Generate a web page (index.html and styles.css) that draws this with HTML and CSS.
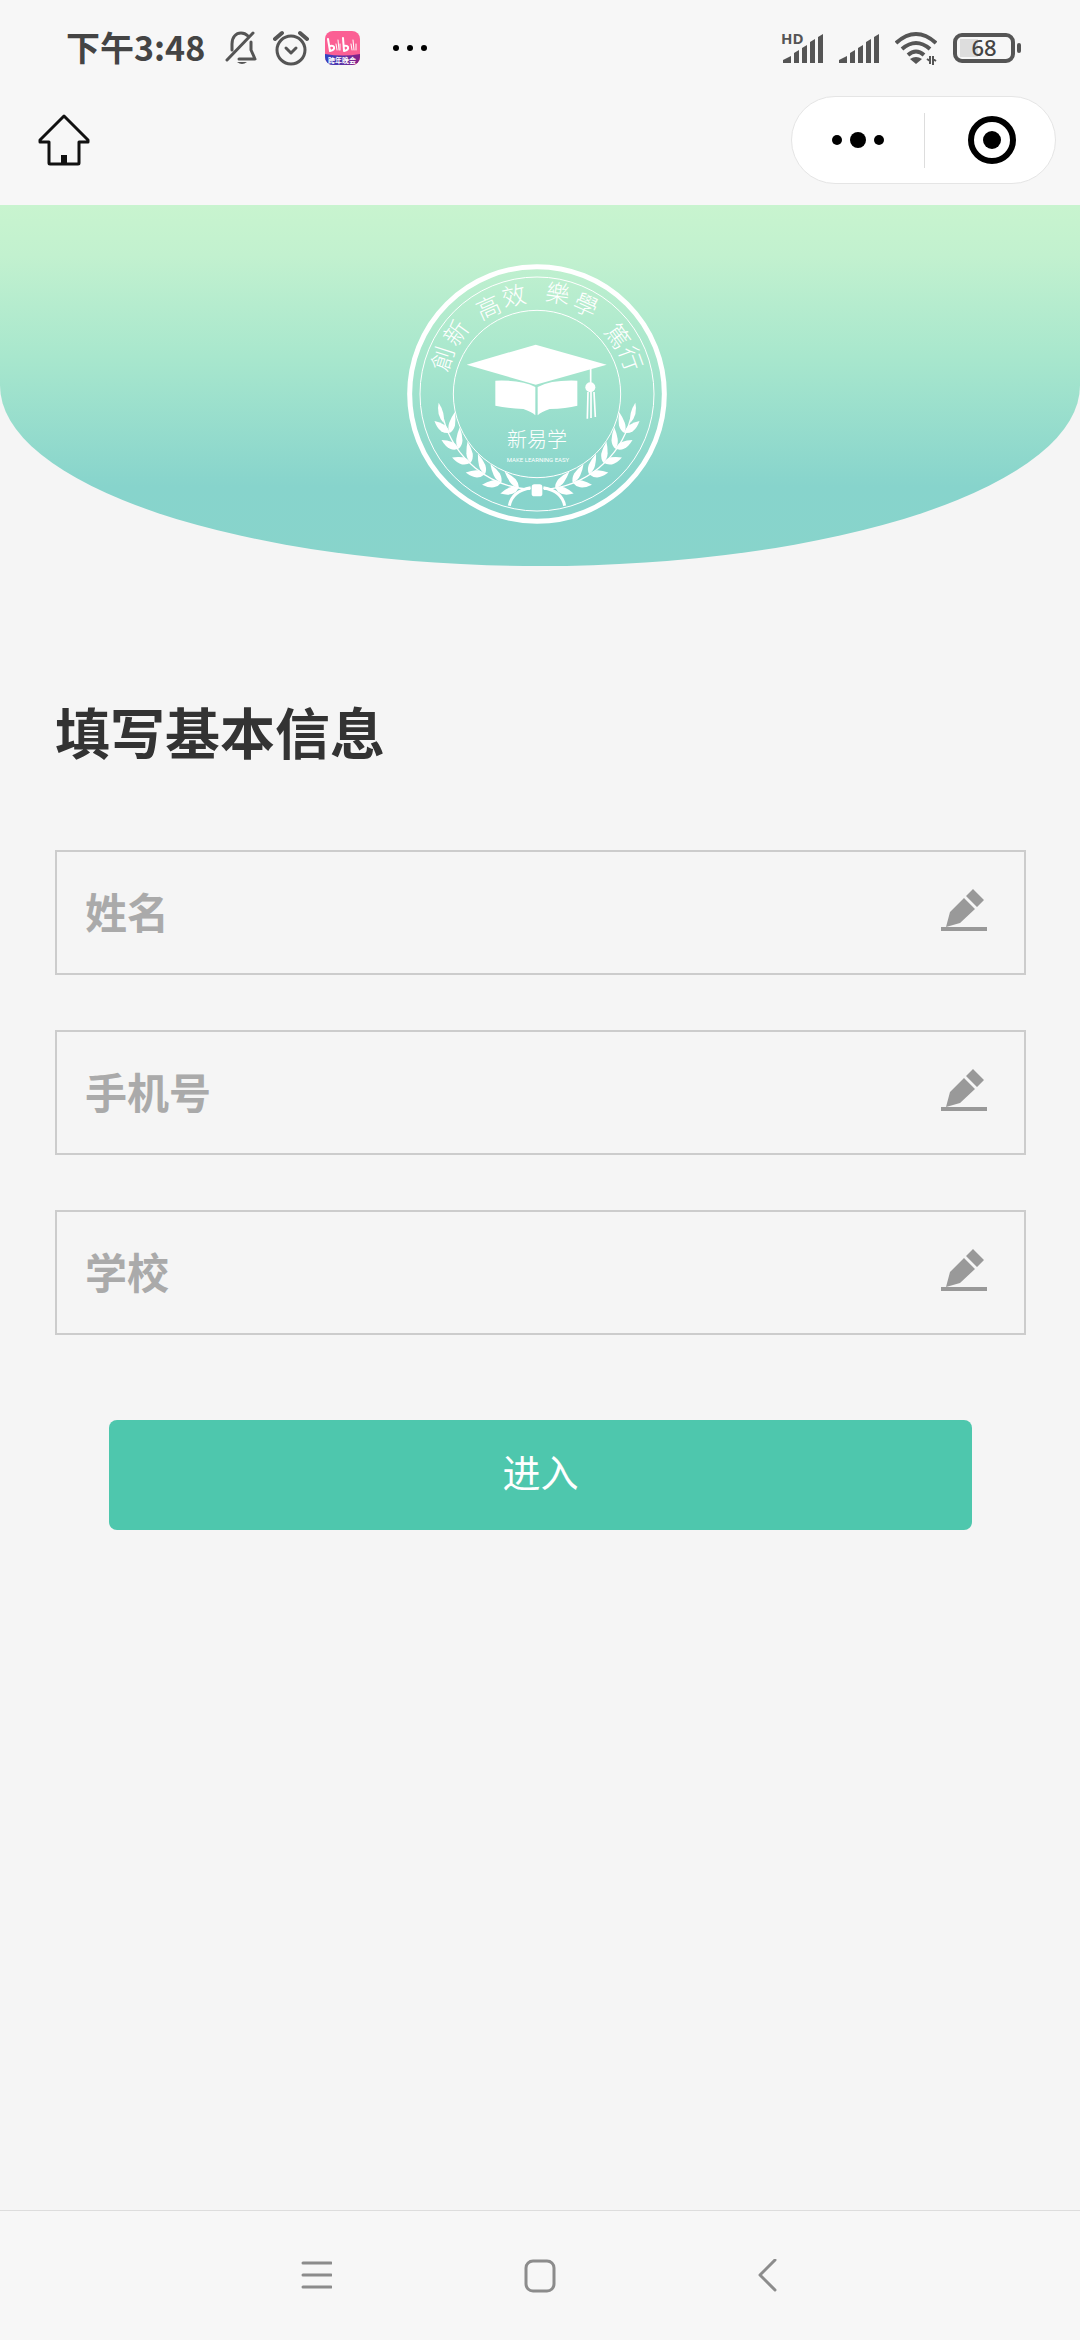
FILE: index.html
```html
<!DOCTYPE html>
<html lang="zh-CN">
<head>
<meta charset="utf-8">
<meta name="viewport" content="width=device-width, initial-scale=1">
<title>填写基本信息</title>
<link rel="stylesheet" href="styles.css">
</head>
<body>
<header class="top">
  <div class="status">
    <div class="status-group">
      <span class="time">下午3:48</span>
      <svg width="32" height="34" viewBox="0 0 32 34" fill="none" stroke="#555" stroke-width="3" stroke-linecap="round" stroke-linejoin="round" aria-hidden="true">
        <path d="M7 19V13C7 6 11 2 16 2Q20 2 23 5M26 11V19L30 28H14M2 29L28 2"/>
        <path d="M12 31Q17 35 22 31Z" fill="#555" stroke="none"/>
      </svg>
      <svg width="36" height="36" viewBox="0 0 36 36" fill="none" stroke="#555" stroke-width="3" stroke-linecap="round" stroke-linejoin="round" aria-hidden="true">
        <circle cx="18" cy="20" r="14"/>
        <path d="M13 18L18 23L23 18"/>
        <path d="M2 9L9 3M27 3L34 9" stroke-width="4"/>
      </svg>
      <svg width="35" height="34" viewBox="0 0 35 34" aria-hidden="true">
        <defs>
          <linearGradient id="app-band"><stop offset="0" stop-color="#2f45c4"/><stop offset="1" stop-color="#8a1f86"/></linearGradient>
          <clipPath id="app-shape"><rect width="35" height="34" rx="8"/></clipPath>
        </defs>
        <g clip-path="url(#app-shape)">
          <rect width="35" height="34" fill="#fb5f94"/>
          <path d="M0 23Q18 26 35 23V34H0Z" fill="url(#app-band)"/>
        </g>
        <g fill="none" stroke="#fff" stroke-width="2" stroke-linecap="round" stroke-linejoin="round">
          <path d="M3 8L5 20Q10 19 9 16Q8 14 5 15M18 7L19 20Q24 19 23 16Q22 14 19 15"/>
          <path d="M11 13L12 19M13 9L14 19M15 13V19M26 13L27 19M28 9L29 19M31 13V19" stroke-width="1"/>
        </g>
        <text x="17" y="32" text-anchor="middle" class="app-text">跨年晚会</text>
      </svg>
      <svg class="more" width="36" height="8" viewBox="0 0 36 8" aria-hidden="true"><circle cx="4" cy="4" r="3"/><circle cx="18" cy="4" r="3"/><circle cx="32" cy="4" r="3"/></svg>
    </div>
    <div class="status-group">
      <svg width="43" height="48" viewBox="0 -8 43 48" fill="#555" aria-hidden="true">
        <text x="1" y="12" class="hd-text">HD</text>
        <path d="M3 31V28L11 24V31ZM14 31V21L19 18V31ZM22 31V16L27 13V31ZM30 31V10L35 7V31ZM38 31V5L43 2V31Z"/>
      </svg>
      <svg width="40" height="48" viewBox="0 -8 40 48" fill="#555" aria-hidden="true">
        <path d="M0 31V28L8 24V31ZM11 31V21L16 18V31ZM19 31V16L24 13V31ZM27 31V10L32 7V31ZM35 31V5L40 2V31Z"/>
      </svg>
      <svg width="42" height="34" viewBox="0 0 42 34" fill="none" stroke="#555" stroke-width="4" aria-hidden="true">
        <path d="M1 12Q21 -6 41 12M7 18Q21 6 35 18M13 24Q21 17 29 24"/>
        <path d="M15 28Q21 24 27 28L21 33Z" fill="#555" stroke="none"/>
        <path d="M32 28L35 30V25V33M41 30L38 28V25V34" stroke-width="2"/>
      </svg>
      <svg width="68" height="30" viewBox="0 0 68 30" aria-label="68%">
        <rect x="7" y="6" width="18" height="18" fill="#ddd"/>
        <rect x="2" y="2" width="58" height="26" rx="7" fill="none" stroke="#555" stroke-width="4"/>
        <rect x="64" y="10" width="4" height="10" rx="2" fill="#555"/>
        <text x="31" y="23" text-anchor="middle" class="battery-text">68</text>
      </svg>
    </div>
  </div>
  <div class="bar">
    <button class="plain" type="button" aria-label="首页">
      <svg width="54" height="54" viewBox="0 0 54 54" fill="none" stroke="#111" stroke-width="3" stroke-linejoin="round">
        <path d="M27 3L51 27V29H42V50Q42 51 41 51H13Q12 51 12 50V29H3V27Z"/>
        <path d="M27 42V51" stroke-width="6"/>
      </svg>
    </button>
    <div class="capsule">
      <button class="plain capsule-btn" type="button" aria-label="更多">
        <svg width="52" height="18" viewBox="0 0 52 18"><circle cx="5" cy="9" r="5"/><circle cx="26" cy="9" r="8"/><circle cx="47" cy="9" r="5"/></svg>
      </button>
      <button class="plain capsule-btn" type="button" aria-label="关闭">
        <svg width="50" height="50" viewBox="0 0 50 50"><circle cx="25" cy="25" r="21" fill="none" stroke="#000" stroke-width="6"/><circle cx="25" cy="25" r="9"/></svg>
      </button>
    </div>
  </div>
</header>

<div class="hero">
  <svg width="266" height="260" viewBox="51 41 798 780" fill="#fff" role="img" aria-label="新易学">
    <defs>
      <g id="pair">
        <path d="M441 718Q424 718 412 706Q399 693 390 678Q412 684 427 694Q440 705 441 718Z"/>
        <path d="M441 718Q426 714 413 722Q400 731 390 745Q413 747 426 739Q437 732 441 718Z"/>
      </g>
      <g id="branch">
        <path d="M420 717A287 287 0 0 1 160 505" fill="none" stroke="#fff" stroke-width="4"/>
        <use href="#pair" transform="rotate(11 441 431)"/>
        <use href="#pair" transform="rotate(22 441 431)"/>
        <use href="#pair" transform="rotate(33 441 431)"/>
        <use href="#pair" transform="rotate(44 441 431)"/>
        <use href="#pair" transform="rotate(55 441 431)"/>
        <use href="#pair" transform="rotate(66 441 431)"/>
        <path d="M161 518Q138 492 146 457Q166 488 161 518Z"/>
        <path d="M422 712Q366 722 358 766" fill="none" stroke="#fff" stroke-width="9"/>
      </g>
    </defs>
    <g fill="none" stroke="#fff">
      <circle cx="441" cy="431" r="382" stroke-width="15"/>
      <circle cx="441" cy="431" r="351" stroke-width="3"/>
      <circle cx="441" cy="431" r="251" stroke-width="3"/>
    </g>
    <g class="motto" text-anchor="middle">
      <text transform="translate(158 325) rotate(-72)" y="26">創</text>
      <text transform="translate(198 248) rotate(-54)" y="26">新</text>
      <text transform="translate(295 172) rotate(-24)" y="26">高</text>
      <text transform="translate(372 137) rotate(-12)" y="26">效</text>
      <text transform="translate(503 130) rotate(8)" y="26">樂</text>
      <text transform="translate(587 165) rotate(24)" y="26">學</text>
      <text transform="translate(683 258) rotate(54)" y="26">篤</text>
      <text transform="translate(722 325) rotate(70)" y="26">行</text>
    </g>
    <path d="M230 343L437 283L650 343L437 403Z"/>
    <path d="M316 391Q395 388 436 410V495Q425 484 400 476Q350 474 316 466Z"/>
    <path d="M562 391Q484 388 443 410V495Q454 484 479 476Q529 474 562 466Z"/>
    <path d="M602 355V400M594 425L592 505M603 425V503M612 425L616 500" fill="none" stroke="#fff" stroke-width="5"/>
    <circle cx="601" cy="411" r="15"/>
    <text x="441" y="589" text-anchor="middle" class="brand">新易学</text>
    <text x="444" y="636" text-anchor="middle" class="slogan">MAKE LEARNING EASY</text>
    <use href="#branch"/>
    <use href="#branch" transform="translate(882 0) scale(-1 1)"/>
    <rect x="425" y="702" width="32" height="36" rx="8"/>
  </svg>
</div>

<main class="content">
  <h1 class="title">填写基本信息</h1>
  <form class="form">
    <label class="field">
      <input class="field-input" type="text" placeholder="姓名" aria-label="姓名">
      <svg class="pen" width="46" height="44" viewBox="0 0 46 44" aria-hidden="true"><path d="M32 0L43 11L36 18L25 7ZM23 9L34 20L19 34L5 38L9 23Z"/><rect y="38" width="46" height="4"/></svg>
    </label>
    <label class="field">
      <input class="field-input" type="tel" placeholder="手机号" aria-label="手机号">
      <svg class="pen" width="46" height="44" viewBox="0 0 46 44" aria-hidden="true"><path d="M32 0L43 11L36 18L25 7ZM23 9L34 20L19 34L5 38L9 23Z"/><rect y="38" width="46" height="4"/></svg>
    </label>
    <label class="field">
      <input class="field-input" type="text" placeholder="学校" aria-label="学校">
      <svg class="pen" width="46" height="44" viewBox="0 0 46 44" aria-hidden="true"><path d="M32 0L43 11L36 18L25 7ZM23 9L34 20L19 34L5 38L9 23Z"/><rect y="38" width="46" height="4"/></svg>
    </label>
    <button class="submit" type="button">进入</button>
  </form>
</main>

<nav class="system-nav">
  <button class="plain" type="button" aria-label="最近任务">
    <svg width="32" height="34" viewBox="0 0 32 34" fill="none" stroke="#8c8c8c" stroke-width="3" stroke-linecap="round"><path d="M3 4H31M3 16H31M3 28H31"/></svg>
  </button>
  <button class="plain" type="button" aria-label="主屏幕">
    <svg width="32" height="34" viewBox="0 0 32 34" fill="none" stroke="#8c8c8c" stroke-width="3"><rect x="2" y="2" width="28" height="30" rx="7"/></svg>
  </button>
  <button class="plain" type="button" aria-label="返回">
    <svg width="32" height="34" viewBox="0 0 32 34" fill="none" stroke="#8c8c8c" stroke-width="3" stroke-linecap="round" stroke-linejoin="round"><path d="M27 1L12 16L27 31"/></svg>
  </button>
</nav>
</body>
</html>
```
FILE: styles.css
```css
* {
  box-sizing: border-box;
}

body {
  display: flex;
  flex-direction: column;
  min-height: 100vh;
  margin: 0;
  background: #f5f5f5;
  color: #333;
  font-family: "Noto Sans CJK SC", sans-serif;
}

svg {
  display: block;
  flex: none;
}

.plain {
  display: flex;
  align-items: center;
  justify-content: center;
  padding: 0;
  border: 0;
  background: none;
}

.top {
  height: 205px;
  background: #f7f7f7;
}

.status {
  display: flex;
  align-items: center;
  justify-content: space-between;
  height: 96px;
  padding: 0 59px 0 66px;
}

.status-group {
  display: flex;
  align-items: center;
  gap: 16px;
}

.time {
  padding: 0 4px 2px 0;
  color: #444;
  font-size: 34px;
  font-weight: 700;
  line-height: 48px;
}

.more {
  margin-left: 16px;
}

.app-text {
  fill: #fff;
  font-size: 7px;
  font-weight: 700;
}

.hd-text {
  font-family: "Open Sans", sans-serif;
  font-size: 15px;
  font-weight: 700;
}

.battery-text {
  fill: #444;
  font-family: "Noto Sans", sans-serif;
  font-size: 22px;
  font-weight: 500;
}

.bar {
  display: flex;
  align-items: center;
  justify-content: space-between;
  padding: 0 24px 0 37px;
}

.capsule {
  display: flex;
  align-items: center;
  width: 265px;
  height: 88px;
  border: 1px solid #e5e5e5;
  border-radius: 44px;
  background: #fff;
}

.capsule-btn {
  width: 50%;
  height: 55px;
}

.capsule-btn + .capsule-btn {
  padding-left: 4px;
  border-left: 1px solid #ddd;
}

.hero {
  display: flex;
  justify-content: center;
  height: 361px;
  padding-top: 59px;
  border-radius: 0 0 50% 50%;
  background: linear-gradient(#c8f4cf 0%, #c2f1cf 14%, #a8e7cd 42%, #87d4cc 78%, #88d4cb 100%);
}

.motto {
  font-family: "Noto Sans CJK TC", sans-serif;
  font-size: 72px;
  font-weight: 300;
}

.brand {
  font-size: 60px;
  font-weight: 300;
}

.slogan {
  font-family: Roboto, sans-serif;
  font-size: 18px;
}

.content {
  flex: 1;
  padding: 124px 54px 80px 55px;
}

.title {
  margin: 0 0 80px;
  font-size: 55px;
  font-weight: 700;
  line-height: 80px;
}

.form {
  display: flex;
  flex-direction: column;
  gap: 55px;
}

.field {
  display: flex;
  align-items: center;
  height: 125px;
  padding: 0 37px 3px 28px;
  border: 2px solid #ccc;
}

.field-input {
  flex: 1;
  min-width: 0;
  padding: 0;
  border: 0;
  outline: 0;
  background: none;
  color: #333;
  font: 700 42px/60px "Noto Sans CJK SC", sans-serif;
}

.field-input::placeholder {
  color: #aaa;
  opacity: 1;
}

.pen {
  fill: #999;
}

.submit {
  height: 110px;
  margin: 30px 54px 0;
  padding: 0 0 8px;
  border: 0;
  border-radius: 8px;
  background: #4ec7ad;
  color: #fff;
  font: 400 38px/56px "Noto Sans CJK SC", sans-serif;
}

.system-nav {
  display: flex;
  align-items: center;
  justify-content: center;
  gap: 192px;
  height: 130px;
  border-top: 1px solid #ddd;
  background: #f7f7f7;
}
```
